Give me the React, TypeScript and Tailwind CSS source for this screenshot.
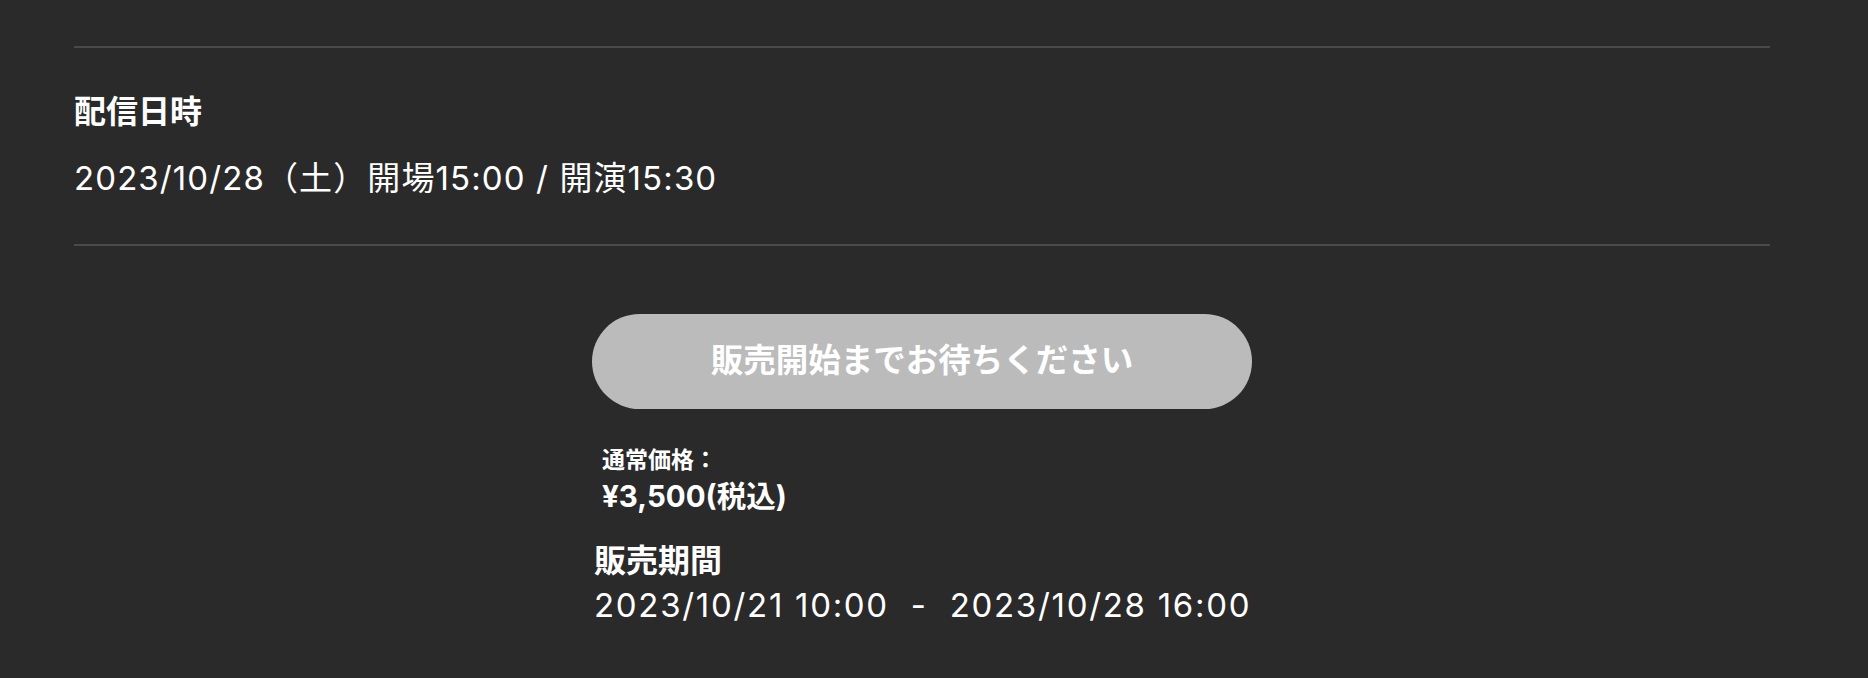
import React from "react";

const font = { fontFamily: 'Inter, "Noto Sans CJK JP", "Noto Sans", sans-serif' };

export default function App() {
  return (
    <div className="w-full h-[678px] bg-[#2a2a2a] text-white overflow-hidden" style={font}>
      <div className="pl-[74px] pr-[98px] pt-[46px]">
        <div className="border-t-2 border-[#4a4a4a]" />

        <section className="pt-[41px] pb-[42px]">
          <h3 className="text-[32px] leading-[45px] font-bold">配信日時</h3>
          <p className="mt-[20px] text-[33px] leading-[48px] tracking-[1.1px]">
            2023/10/28（土）開場15:00 / 開演15:30
          </p>
        </section>

        <div className="border-t-2 border-[#4a4a4a]" />

        <div className="w-[660px] mx-auto pt-[68px]">
          <button
            type="button"
            disabled
            className="w-full h-[95px] rounded-full bg-[#bbbbbb] text-white text-[32.5px] font-bold flex items-center justify-center"
          >
            販売開始までお待ちください
          </button>

          <div className="pl-[10px] pt-[35px]">
            <div className="text-[23px] leading-[33px] font-bold">通常価格：</div>
            <div className="text-[29.5px] leading-[38px] font-bold">¥3,500(税込)</div>
          </div>

          <div className="pl-[2px] pt-[24px]">
            <div className="text-[32px] leading-[43px] font-bold">販売期間</div>
            <div className="text-[33px] leading-[46px] tracking-[1.7px] whitespace-pre">
              2023/10/21 10:00  -  2023/10/28 16:00
            </div>
          </div>
        </div>
      </div>
    </div>
  );
}
